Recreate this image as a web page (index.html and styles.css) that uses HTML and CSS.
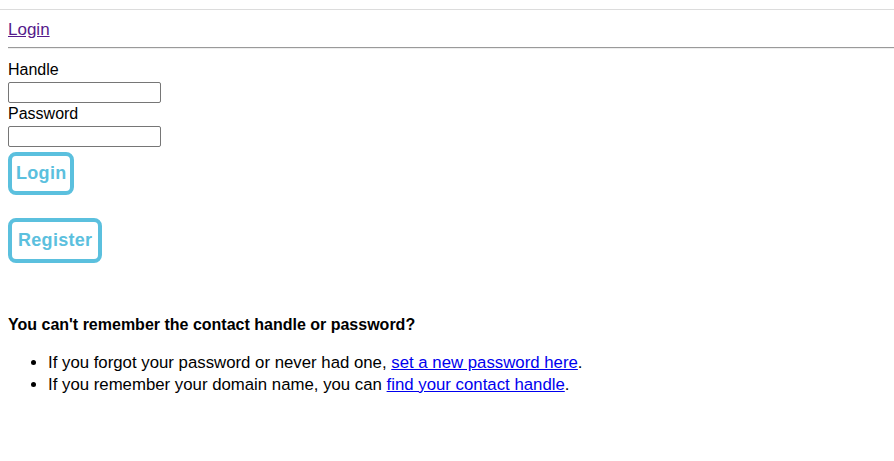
FILE: index.html
```html
<!DOCTYPE html>
<html>
<head>
<meta charset="utf-8">
<link rel="stylesheet" href="styles.css">
</head>
<body>
<div class="topbar"></div>
<div class="page">
  <nav class="nav"><a class="visited" href="#">Login</a></nav>
  <hr class="rule">
  <form class="form">
    <label class="label" for="h">Handle</label>
    <input class="input" id="h" type="text">
    <label class="label" for="p">Password</label>
    <input class="input" id="p" type="password">
    <div class="buttons">
      <button class="btn" type="button">Login</button>
      <button class="btn btn-wide" type="button">Register</button>
    </div>
  </form>
  <h4 class="help-title">You can't remember the contact handle or password?</h4>
  <ul class="help-list">
    <li>If you forgot your password or never had one, <a class="link" href="#">set a new password here</a>.</li>
    <li>If you remember your domain name, you can <a class="link" href="#">find your contact handle</a>.</li>
  </ul>
</div>
</body>
</html>
```
FILE: styles.css
```css
html, body {
  margin: 0;
  padding: 0;
  background: #fff;
}
body {
  font-family: "Liberation Sans", Arial, Helvetica, sans-serif;
  font-size: 16px;
  color: #000;
}
.topbar {
  height: 9px;
  border-bottom: 1px solid #dcdcdc;
}
.page {
  padding-left: 8px;
}
.nav {
  padding-top: 11px;
  line-height: 18px;
  font-size: 17px;
}
.visited {
  color: #551a8b;
}
.rule {
  margin: 8px 0 12px 0;
  border: 0;
  border-top: 1px solid #9a9a9a;
  border-bottom: 1px solid #eeeeee;
  height: 0;
}
.form {
  display: flex;
  flex-direction: column;
  align-items: flex-start;
}
.label {
  display: block;
  line-height: 18px;
}
.input {
  box-sizing: border-box;
  width: 153px;
  height: 21px;
  margin: 3px 0 2px 0;
  border: 1px solid #767676;
  border-radius: 2px;
  padding: 0 2px;
  font: inherit;
}
.buttons {
  display: flex;
  flex-direction: column;
  align-items: flex-start;
  gap: 23px;
  margin-top: 3px;
}
.btn {
  box-sizing: border-box;
  background: #fff;
  border: 4px solid #5bc0de;
  border-radius: 8px;
  color: #5bc0de;
  font-family: "Liberation Sans", Arial, Helvetica, sans-serif;
  font-weight: bold;
  font-size: 18px;
  line-height: 21px;
  letter-spacing: 0.3px;
  padding: 7px 4px;
  cursor: pointer;
}
.btn-wide {
  padding: 8px 6px;
}
.help-title {
  margin: 53px 0 0 0;
  font-size: 16px;
  line-height: 18px;
  font-weight: bold;
}
.help-list {
  margin: 18px 0 0 0;
  padding-left: 40px;
  font-size: 16.8px;
  line-height: 22px;
}
.link {
  color: #0000ee;
}
```
